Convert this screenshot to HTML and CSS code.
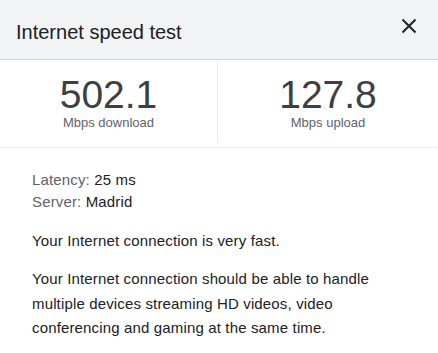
FILE: index.html
```html
<!DOCTYPE html>
<html>
<head>
<meta charset="utf-8">
<link rel="stylesheet" href="styles.css">
</head>
<body>
<div class="panel">
  <div class="header">
    <div class="title">Internet speed test</div>
    <svg class="close" width="16" height="16" viewBox="0 0 16 16"><path d="M1.5 1.5 L14.5 14.5 M14.5 1.5 L1.5 14.5" stroke="#202124" stroke-width="2" fill="none"/></svg>
  </div>
  <div class="stats">
    <div class="stat">
      <div class="num">502.1</div>
      <div class="unit">Mbps download</div>
    </div>
    <div class="stat">
      <div class="num">127.8</div>
      <div class="unit">Mbps upload</div>
    </div>
  </div>
  <div class="body">
    <div class="meta">
      <div><span class="label">Latency:</span> 25 ms</div>
      <div><span class="label">Server:</span> Madrid</div>
    </div>
    <p class="p1">Your Internet connection is very fast.</p>
    <p class="p2">Your Internet connection should be able to handle multiple devices streaming HD videos, video conferencing and gaming at the same time.</p>
  </div>
</div>
</body>
</html>
```
FILE: styles.css
```css
html, body { margin: 0; padding: 0; background: #fff; }
body { font-family: "Liberation Sans", Arial, sans-serif; color: #202124; }
.panel { width: 438px; }
.header {
  height: 59px;
  background: #f1f3f4;
  border-bottom: 1px solid #d0d0d0;
  display: flex;
  align-items: center;
  justify-content: space-between;
  padding: 0 21px 0 16px;
}
.title { font-size: 20px; color: #202124; padding-top: 5px; }
.close { margin-top: -8px; }
.stats {
  display: grid;
  grid-template-columns: 218px 1fr;
  border-bottom: 1px solid #ebebeb;
  height: 87px;
}
.stat { display: flex; flex-direction: column; align-items: center; padding-top: 15px; }
.stat:first-child { border-right: 1px solid #ebebeb; margin-bottom: 4px; }
.num { font-size: 39px; line-height: 40px; color: #3c4043; }
.unit { font-size: 13px; line-height: 15px; color: #5f6368; margin-top: 0; }
.body { padding: 21px 32px 0; font-size: 15px; letter-spacing: 0.15px; }
.meta { line-height: 22px; color: #202124; }
.label { color: #5f6368; }
.p1 { margin: 17px 0 0; line-height: 22px; }
.p2 { margin: 15px 0 0; line-height: 24.5px; }
```
